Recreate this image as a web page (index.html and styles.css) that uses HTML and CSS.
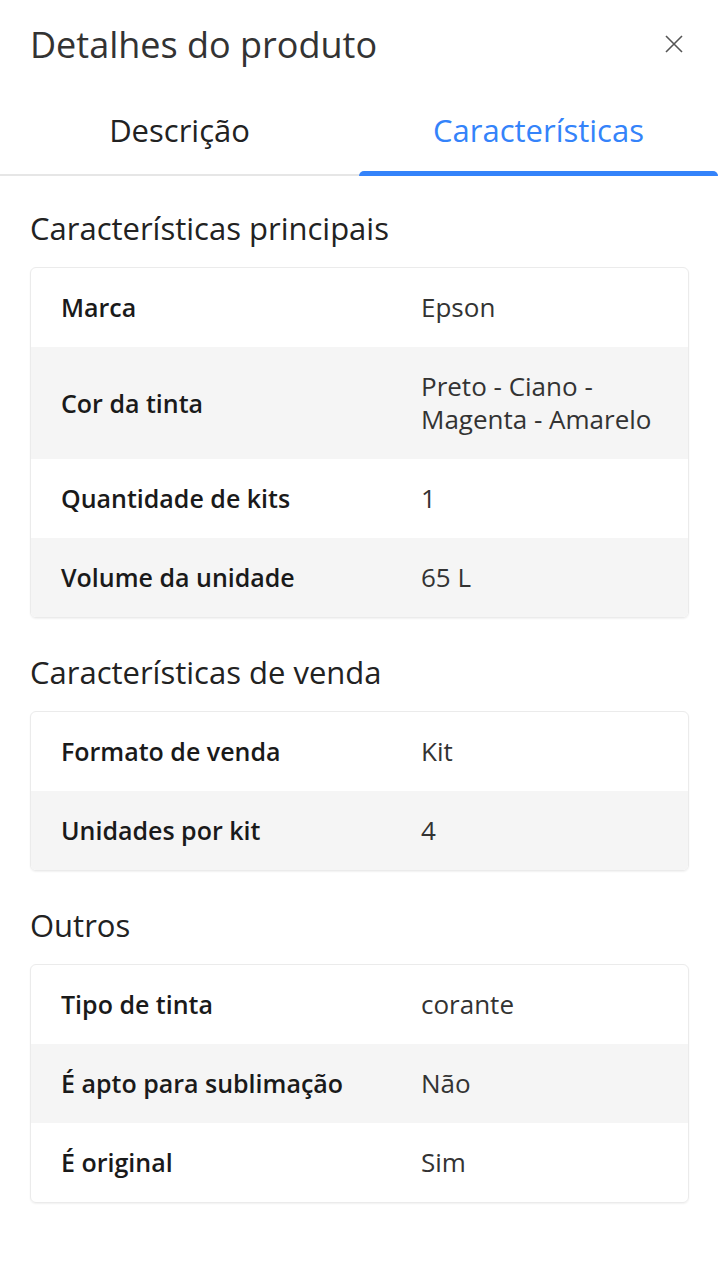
FILE: index.html
```html
<!DOCTYPE html>
<html>
<head>
	<meta charset="utf-8">
	<title>Detalhes do produto</title>
	<link rel="stylesheet" href="styles.css">
</head>
<body>
	<div class="header">
		<h1 class="title">Detalhes do produto</h1>
		<span class="close">
			<svg width="20" height="20" viewBox="0 0 20 20"><path d="M2 2 L18 18 M18 2 L2 18" stroke="#555" stroke-width="1.6" fill="none"/></svg>
		</span>
	</div>

	<div class="tabs">
		<div class="tab">Descrição</div>
		<div class="tab active">Características</div>
	</div>

	<div class="content">
		<h2 class="section-title first">Características principais</h2>
		<div class="card">
			<div class="row"><div class="label">Marca</div><div class="value">Epson</div></div>
			<div class="row"><div class="label">Cor da tinta</div><div class="value">Preto - Ciano -<br>Magenta - Amarelo</div></div>
			<div class="row"><div class="label">Quantidade de kits</div><div class="value">1</div></div>
			<div class="row"><div class="label">Volume da unidade</div><div class="value">65 L</div></div>
		</div>

		<h2 class="section-title">Características de venda</h2>
		<div class="card">
			<div class="row"><div class="label">Formato de venda</div><div class="value">Kit</div></div>
			<div class="row"><div class="label">Unidades por kit</div><div class="value">4</div></div>
		</div>

		<h2 class="section-title">Outros</h2>
		<div class="card">
			<div class="row"><div class="label">Tipo de tinta</div><div class="value">corante</div></div>
			<div class="row"><div class="label">É apto para sublimação</div><div class="value">Não</div></div>
			<div class="row"><div class="label">É original</div><div class="value">Sim</div></div>
		</div>
	</div>
</body>
</html>
```

FILE: styles.css
```css
body{
	margin: 0;
	background: #fff;
	font-family: "Open Sans", "Liberation Sans", sans-serif;
	color: #333;
}
.header{
	display: flex;
	align-items: center;
	justify-content: space-between;
	height: 88px;
	padding: 0 34px 0 30px;
}
.title{
	margin: 0;
	font-size: 36px;
	font-weight: 400;
	color: #333;
}
.close{
	display: flex;
}
.tabs{
	display: flex;
	height: 86px;
	border-bottom: 2px solid #e6e6e6;
}
.tab{
	flex: 1;
	display: flex;
	align-items: center;
	justify-content: center;
	padding-bottom: 2px;
	font-size: 31px;
	color: #222;
	position: relative;
}
.tab.active{
	color: #3483fa;
}
.tab.active::after{
	content: '';
	position: absolute;
	left: 0;
	right: 0;
	bottom: -2px;
	height: 5px;
	background: #3483fa;
	border-radius: 5px 5px 0 0;
}
.content{
	padding: 0 29px 40px 30px;
}
.section-title{
	margin: 0;
	padding: 36px 0 21px;
	font-size: 31px;
	font-weight: 400;
	line-height: 36px;
	color: #222;
}
.section-title.first{
	padding-top: 34px;
}
.card{
	border: 1px solid #ebebeb;
	border-radius: 6px;
	overflow: hidden;
	box-shadow: 0 1px 2px rgba(0,0,0,0.06);
}
.row{
	display: flex;
	align-items: center;
	padding: 23px 0;
	font-size: 26px;
	line-height: 33px;
}
.row:nth-child(even){
	background: #f5f5f5;
}
.label{
	width: 360px;
	padding-left: 30px;
	font-size: 25px;
	font-weight: 600;
	color: #1a1a1a;
}
.value{
	flex: 1;
	color: #333;
}
```
